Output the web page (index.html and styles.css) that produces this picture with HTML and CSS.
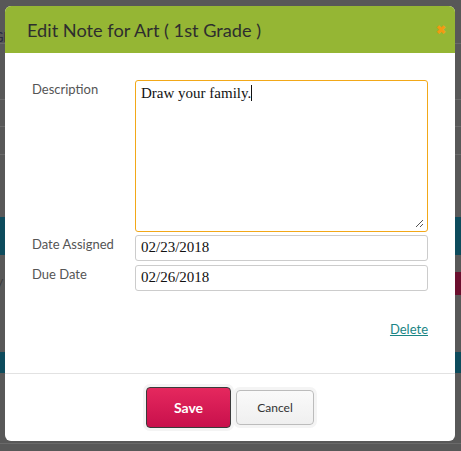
FILE: index.html
```html
<!DOCTYPE html>
<html>
<head>
<meta charset="utf-8">
<link rel="stylesheet" href="styles.css">
</head>
<body>
<div class="page">
  <div class="bg-row h26"></div>
  <div class="bg-row h18 line"><span class="bg-text">Gl</span></div>
  <div class="bg-row h56 line"></div>
  <div class="bg-row h27 line"></div>
  <div class="bg-row h28 line"></div>
  <div class="bg-row h62"></div>
  <div class="bg-band teal h38"></div>
  <div class="bg-row h17"></div>
  <div class="bg-row h23 with-btn"><span class="bg-slash">/</span><span class="bg-btn"></span></div>
  <div class="bg-row h57"></div>
  <div class="bg-band teal h21"></div>
  <div class="bg-row h70 line"></div>
</div>

<div class="modal">
  <div class="modal-header">
    <h1 class="modal-title">Edit Note for Art ( 1st Grade )</h1>
    <span class="close">&#x2716;</span>
  </div>
  <div class="modal-body">
    <div class="form-row">
      <label class="label">Description</label>
      <div class="textarea">Draw your family.<span class="caret"></span>
        <svg class="grip" width="9" height="9" viewBox="0 0 9 9"><path d="M8 1 L1 8 M8 5 L5 8" stroke="#555" stroke-width="1"/></svg>
      </div>
    </div>
    <div class="form-row gap3">
      <label class="label">Date Assigned</label>
      <div class="input">02/23/2018</div>
    </div>
    <div class="form-row gap4">
      <label class="label">Due Date</label>
      <div class="input">02/26/2018</div>
    </div>
    <div class="links"><a class="delete" href="#">Delete</a></div>
  </div>
  <div class="modal-footer">
    <button class="btn btn-save">Save</button>
    <button class="btn btn-cancel">Cancel</button>
  </div>
</div>
</body>
</html>
```
FILE: styles.css
```css
html, body {
  margin: 0;
  padding: 0;
}
body {
  width: 461px;
  height: 451px;
  overflow: hidden;
  position: relative;
  background: #585858;
  font-family: Lato, "Open Sans", sans-serif;
}
.page {
  display: flex;
  flex-direction: column;
}
.bg-row {
  background: #585858;
  position: relative;
}
.line { border-bottom: 1px solid #6a6a6a; }
.h17 { height: 17px; }
.h18 { height: 17px; }
.h21 { height: 21px; }
.h23 { height: 23px; }
.h26 { height: 26px; }
.h27 { height: 26px; }
.h28 { height: 27px; }
.h38 { height: 38px; }
.h56 { height: 55px; }
.h57 { height: 57px; }
.h62 { height: 62px; }
.h70 { height: 70px; }
.teal { background: #0d4b5c; }
.bg-text {
  font-size: 13px;
  color: #2a2a40;
  padding-left: 0;
  margin-left: -6px;
}
.with-btn {
  display: flex;
  justify-content: space-between;
  align-items: center;
}
.bg-slash {
  color: #333;
  font-size: 12px;
  margin-left: -2px;
}
.bg-btn {
  width: 9px;
  height: 23px;
  background: #6b0f2e;
}

.modal {
  position: absolute;
  left: 5px;
  top: 6px;
  width: 450px;
  height: 435px;
  background: #fff;
  border-radius: 6px;
  overflow: hidden;
  display: flex;
  flex-direction: column;
}
.modal-header {
  height: 47px;
  background: #95b634;
  display: flex;
  align-items: center;
  justify-content: space-between;
  padding: 0 9px 0 22px;
  box-sizing: border-box;
}
.modal-title {
  margin: 0;
  font-size: 18.2px;
  font-weight: 400;
  color: #2e2e2e;
}
.close {
  color: #f29a12;
  font-size: 12px;
  font-weight: bold;
}
.modal-body {
  padding: 27px 27px 0 27px;
  flex: 1;
  display: flex;
  flex-direction: column;
}
.form-row {
  display: flex;
}
.gap3 { margin-top: 3px; }
.gap4 { margin-top: 4px; }
.label {
  width: 103px;
  flex: none;
  font-size: 13px;
  color: #555;
  padding-top: 1px;
}
.textarea {
  flex: 1;
  height: 152px;
  box-sizing: border-box;
  border: 1px solid #f2a818;
  border-radius: 3px;
  padding: 4px 5px;
  font-family: "Liberation Serif", serif;
  font-size: 15px;
  color: #111;
  position: relative;
}
.caret {
  display: inline-block;
  width: 1px;
  height: 16px;
  background: #111;
  vertical-align: -3px;
}
.grip {
  position: absolute;
  right: 3px;
  bottom: 3px;
}
.input {
  flex: 1;
  height: 26px;
  box-sizing: border-box;
  border: 1px solid #ccc;
  border-radius: 3px;
  padding: 3px 5px;
  font-family: "Liberation Serif", serif;
  font-size: 15px;
  color: #111;
}
.links {
  display: flex;
  justify-content: flex-end;
  margin-top: 30px;
}
.delete {
  color: #1a8585;
  font-size: 13px;
}
.modal-footer {
  height: 67px;
  border-top: 1px solid #e2e2e2;
  display: flex;
  justify-content: center;
  align-items: center;
  gap: 5px;
}
.btn {
  font-family: Lato, sans-serif;
  border-radius: 4px;
  cursor: pointer;
}
.btn-save {
  width: 85px;
  height: 41px;
  background: linear-gradient(#e5285e, #c8104c);
  border: 1px solid #3a3a3a;
  color: #fff;
  font-weight: bold;
  font-size: 14px;
  box-shadow: 0 0 0 3px #f4f4f4;
}
.btn-cancel {
  width: 78px;
  height: 35px;
  background: linear-gradient(#fafafa, #efefef);
  border: 1px solid #bcbcbc;
  color: #333;
  font-size: 12px;
  box-shadow: 0 0 0 3px #f4f4f4;
}
```
